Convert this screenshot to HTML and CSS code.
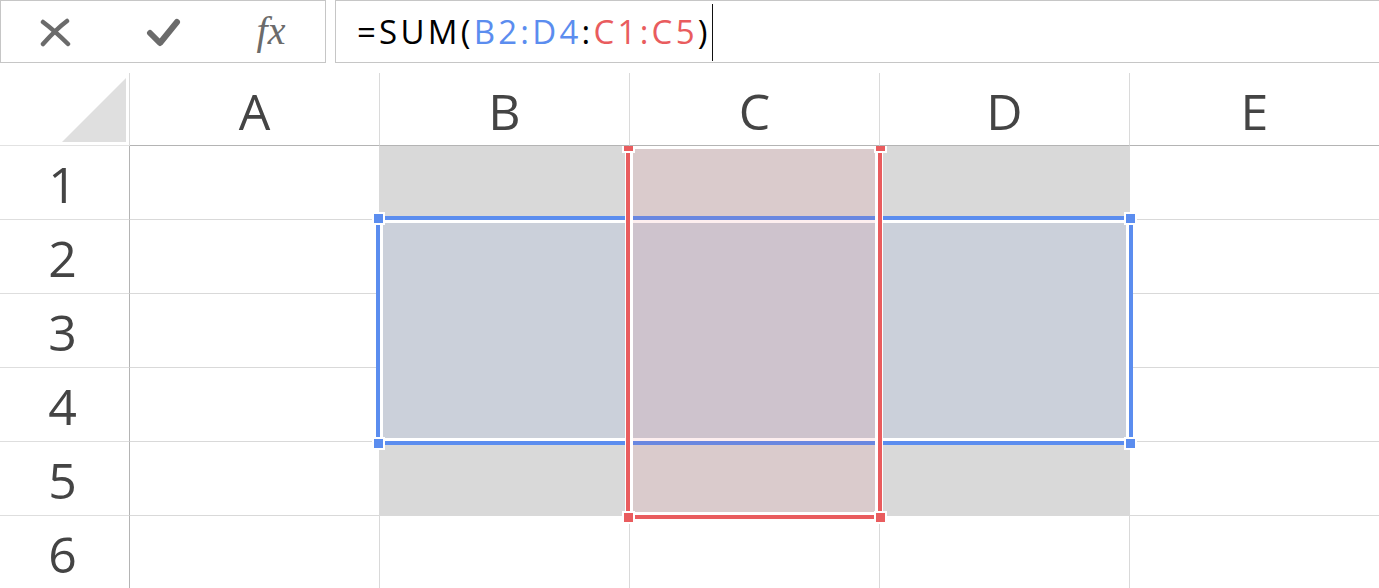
FILE: index.html
```html
<!DOCTYPE html>
<html>
<head>
<meta charset="utf-8">
<link rel="stylesheet" href="styles.css">
</head>
<body>
<div class="fbar">
  <div class="fbtns">
    <div class="slot">
      <svg width="32" height="30" viewBox="0 0 32 30"><path d="M4 5 C 12 11, 20 18, 29 27" class="ic"/><path d="M28 4 C 20 10, 12 18, 4 27" class="ic"/></svg>
    </div>
    <div class="slot">
      <svg width="36" height="30" viewBox="0 0 36 30"><path d="M5 16 L15 26 L32 5" class="ic ck"/></svg>
    </div>
    <div class="slot"><span class="fx">fx</span></div>
  </div>
  <div class="finput">
    <span class="formula">=SUM(<span class="rb">B2:D4</span>:<span class="rr">C1:C5</span>)</span><span class="caret"></span>
  </div>
</div>

<div class="sheet">
  <div class="hdr">
    <div class="corner"><svg width="64" height="64" viewBox="0 0 64 64"><polygon points="64,0 64,64 0,64" fill="#dfdfdf"/></svg></div>
    <div class="ch">A</div><div class="ch">B</div><div class="ch">C</div><div class="ch">D</div><div class="ch">E</div>
  </div>
  <div class="rows">
    <div class="row"><div class="rh">1</div><div class="c"></div><div class="c"></div><div class="c"></div><div class="c"></div><div class="c"></div></div>
    <div class="row"><div class="rh">2</div><div class="c"></div><div class="c"></div><div class="c"></div><div class="c"></div><div class="c"></div></div>
    <div class="row"><div class="rh">3</div><div class="c"></div><div class="c"></div><div class="c"></div><div class="c"></div><div class="c"></div></div>
    <div class="row"><div class="rh">4</div><div class="c"></div><div class="c"></div><div class="c"></div><div class="c"></div><div class="c"></div></div>
    <div class="row"><div class="rh">5</div><div class="c"></div><div class="c"></div><div class="c"></div><div class="c"></div><div class="c"></div></div>
    <div class="row"><div class="rh">6</div><div class="c"></div><div class="c"></div><div class="c"></div><div class="c"></div><div class="c"></div></div>

    <div class="gray"></div>
    <div class="bluebox"></div>
    <div class="redbox"></div>
    <div class="hd hb hb-tl"></div>
    <div class="hd hb hb-tr"></div>
    <div class="hd hb hb-bl"></div>
    <div class="hd hb hb-br"></div>
    <div class="hd hr hr-tl"></div>
    <div class="hd hr hr-tr"></div>
    <div class="hd hr hr-bl"></div>
    <div class="hd hr hr-br"></div>
  </div>
</div>
</body>
</html>
```

FILE: styles.css
```css
html, body {
  margin: 0;
  padding: 0;
  background: #fff;
  overflow: hidden;
  width: 1379px;
  height: 588px;
}

.fbar {
  display: flex;
  height: 63px;
  width: 1400px;
  gap: 9px;
}

.fbtns {
  box-sizing: border-box;
  width: 326px;
  height: 63px;
  border: 1px solid #c6c6c6;
  display: flex;
}

.slot {
  width: 108px;
  display: flex;
  align-items: center;
  justify-content: center;
}

.ic {
  fill: none;
  stroke: #6b6b6b;
  stroke-width: 4.5;
  stroke-linecap: round;
  stroke-linejoin: round;
}

.ic.ck {
  stroke-width: 6;
}

.fx {
  font-family: "Liberation Serif", serif;
  font-style: italic;
  font-size: 40px;
  color: #6b6b6b;
  margin-top: -2px;
}

.finput {
  box-sizing: border-box;
  flex: 1;
  height: 63px;
  border: 1px solid #c6c6c6;
  display: flex;
  align-items: center;
  padding-left: 21px;
}

.formula {
  font-family: "Open Sans", sans-serif;
  font-size: 33px;
  letter-spacing: 3.25px;
  color: #000;
}

.rb { color: #5b8def; }
.rr { color: #e95c5e; }

.caret {
  display: inline-block;
  width: 1px;
  height: 57px;
  background: #111;
  margin-top: 1px;
  margin-left: 1px;
}

.sheet {
  margin-top: 10px;
  width: 1380px;
  font-family: "Open Sans", sans-serif;
  color: #444;
}

.hdr {
  display: grid;
  grid-template-columns: 130px repeat(5, 250px);
  height: 73px;
}

.corner {
  box-sizing: border-box;
  border-right: 1px solid #dadada;
  border-bottom: 1px solid #e2e2e2;
  display: flex;
  align-items: flex-end;
  justify-content: flex-end;
  padding: 0 3px 3px 0;
}

.ch {
  box-sizing: border-box;
  border-right: 1px solid #dadada;
  border-bottom: 1px solid #b4b4b4;
  display: flex;
  align-items: center;
  justify-content: center;
  font-size: 50px;
  line-height: 1;
  padding-top: 3px;
}

.rows {
  position: relative;
  overflow: hidden;
}

.row {
  display: grid;
  grid-template-columns: 130px repeat(5, 250px);
  height: 74px;
}

.rh {
  box-sizing: border-box;
  border-right: 1px solid #b4b4b4;
  border-bottom: 1px solid #dedede;
  display: flex;
  align-items: center;
  justify-content: center;
  font-size: 50px;
  line-height: 1;
  padding: 3px 4px 0 0;
}

.c {
  box-sizing: border-box;
  border-right: 1px solid #d9d9d9;
  border-bottom: 1px solid #d9d9d9;
}

.gray {
  position: absolute;
  left: 379px;
  top: 0;
  width: 751px;
  height: 370px;
  background: #d9d9d9;
}

.bluebox {
  position: absolute;
  box-sizing: border-box;
  left: 376px;
  top: 70px;
  width: 757px;
  height: 229px;
  border: 4px solid #5b8def;
  background: rgba(91, 141, 239, 0.1);
  box-shadow: inset 0 0 0 3px #fff;
}

.redbox {
  position: absolute;
  box-sizing: border-box;
  left: 626px;
  top: -4px;
  width: 256px;
  height: 377px;
  border: 4px solid #e95c5e;
  background: rgba(233, 93, 95, 0.1);
  box-shadow: inset 0 0 0 3px #fff, 0 0 0 1px #fff;
}

.hd {
  position: absolute;
  width: 9px;
  height: 9px;
  border: 2px solid #fff;
}

.hb { background: #5b8def; }
.hr { background: #e95c5e; }

.hb-tl { left: 372px; top: 66px; }
.hb-tr { left: 1124px; top: 66px; }
.hb-bl { left: 372px; top: 291px; }
.hb-br { left: 1124px; top: 291px; }

.hr-tl { left: 622px; top: -6px; }
.hr-tr { left: 874px; top: -6px; }
.hr-bl { left: 622px; top: 365px; }
.hr-br { left: 874px; top: 365px; }
```
